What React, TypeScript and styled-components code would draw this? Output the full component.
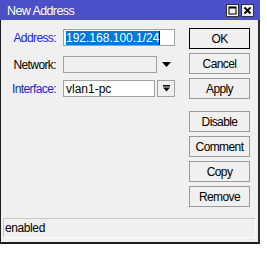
import React from 'react';
import styled, { createGlobalStyle } from 'styled-components';

const GlobalStyle = createGlobalStyle`
  html, body {
    margin: 0;
    padding: 0;
    background: #ffffff;
  }
  body {
    font-family: "Liberation Sans", Arial, sans-serif;
    font-size: 12px;
  }
`

const Window = styled.div`
  width: 257px;
  height: 242px;
  background: #f0f0f0;
  border-left: 1px solid #1e1e1e;
  border-right: 2px solid #2a2a2a;
  border-bottom: 2px solid #1e1e1e;
  display: flex;
  flex-direction: column;
`

const TitleBar = styled.div`
  height: 20px;
  margin-left: -1px;
  margin-right: -2px;
  background: #4b4fc8;
  display: flex;
  align-items: center;
  padding: 0 6px 0 7px;
  color: #ffffff;
  font-size: 12.5px;
  letter-spacing: -0.6px;
`

const Title = styled.div`
  flex: 1;
  padding-top: 1px;
`

const TitleButton = styled.div`
  width: 11px;
  height: 11px;
  margin-left: 2px;
  margin-top: 1px;
  background: #f0f0f0;
  border: 1px solid #333;
  display: flex;
  align-items: center;
  justify-content: center;
`

const Body = styled.div`
  flex: 1;
  display: flex;
  padding: 8px 8px 0 0;
`

const Form = styled.div`
  flex: 1;
  display: flex;
  flex-direction: column;
  padding-top: 1px;
`

const Row = styled.div<{ $top: number }>`
  display: flex;
  align-items: center;
  margin-top: ${p => p.$top}px;
  height: 17px;
`

const Label = styled.div<{ $blue?: boolean }>`
  width: 55px;
  text-align: right;
  margin-right: 7px;
  color: ${p => (p.$blue ? '#2222e4' : '#000000')};
  font-size: 12px;
  letter-spacing: -0.6px;
`

const Input = styled.div<{ $width: number; $disabled?: boolean }>`
  width: ${p => p.$width}px;
  height: 17px;
  box-sizing: border-box;
  border: 1px solid #a0a0a0;
  background: ${p => (p.$disabled ? '#f0f0f0' : '#ffffff')};
  display: flex;
  align-items: center;
  padding-left: 2px;
  color: #000;
`

const Selected = styled.span`
  background: #0078d7;
  color: #ffffff;
  line-height: 14px;
  border-right: 1px solid #000;
`

const Arrow = styled.div`
  width: 18px;
  height: 17px;
  display: flex;
  align-items: center;
  justify-content: center;
`

const DropButton = styled.div`
  width: 18px;
  height: 17px;
  box-sizing: border-box;
  margin-left: 2px;
  border: 1px solid #a0a0a0;
  background: #f0f0f0;
  display: flex;
  align-items: center;
  justify-content: center;
`

const Buttons = styled.div`
  width: 61px;
  display: flex;
  flex-direction: column;
  gap: 4px;
`

const Button = styled.div<{ $default?: boolean; $gap?: number }>`
  height: 21px;
  box-sizing: border-box;
  border: 1px solid ${p => (p.$default ? '#000000' : '#9a9a9a')};
  background: #f0f0f0;
  display: flex;
  align-items: center;
  justify-content: center;
  margin-top: ${p => p.$gap || 0}px;
  color: #000;
  font-size: 12px;
  letter-spacing: -0.6px;
`

const StatusBar = styled.div`
  margin: 0 2px 4px 2px;
  height: 20px;
  box-sizing: border-box;
  border-top: 1px solid #c8c8c8;
  border-left: 1px solid #c8c8c8;
  border-right: 1px solid #fcfcfc;
  border-bottom: 1px solid #fcfcfc;
  display: flex;
  align-items: center;
  padding-left: 1px;
  letter-spacing: -0.4px;
`

const App: React.FC = () => {
  return (
    <>
      <GlobalStyle />
      <Window>
        <TitleBar>
          <Title>New Address</Title>
          <TitleButton>
            <svg width="9" height="9" viewBox="0 0 9 9">
              <rect x="1" y="1" width="7" height="7" fill="none" stroke="#000" strokeWidth="1" />
              <rect x="1" y="1" width="7" height="1.5" fill="#000" />
            </svg>
          </TitleButton>
          <TitleButton>
            <svg width="9" height="9" viewBox="0 0 9 9">
              <path d="M1.5 1.5 L7.5 7.5 M7.5 1.5 L1.5 7.5" stroke="#000" strokeWidth="1.8" />
            </svg>
          </TitleButton>
        </TitleBar>
        <Body>
          <Form>
            <Row $top={0}>
              <Label $blue>Address:</Label>
              <Input $width={112}>
                <Selected>192.168.100.1/24</Selected>
              </Input>
            </Row>
            <Row $top={10}>
              <Label>Network:</Label>
              <Input $width={94} $disabled />
              <Arrow>
                <svg width="9" height="5" viewBox="0 0 9 5">
                  <path d="M0 0 L9 0 L4.5 5 Z" fill="#000" />
                </svg>
              </Arrow>
            </Row>
            <Row $top={7}>
              <Label $blue>Interface:</Label>
              <Input $width={92}>vlan1-pc</Input>
              <DropButton>
                <svg width="7" height="7" viewBox="0 0 7 7">
                  <rect x="0" y="0" width="7" height="1.5" fill="#000" />
                  <path d="M0 2.5 L7 2.5 L3.5 6.5 Z" fill="#000" />
                </svg>
              </DropButton>
            </Row>
          </Form>
          <Buttons>
            <Button $default>OK</Button>
            <Button>Cancel</Button>
            <Button>Apply</Button>
            <Button $gap={8}>Disable</Button>
            <Button>Comment</Button>
            <Button>Copy</Button>
            <Button>Remove</Button>
          </Buttons>
        </Body>
        <StatusBar>enabled</StatusBar>
      </Window>
    </>
  );
};

export default App;
